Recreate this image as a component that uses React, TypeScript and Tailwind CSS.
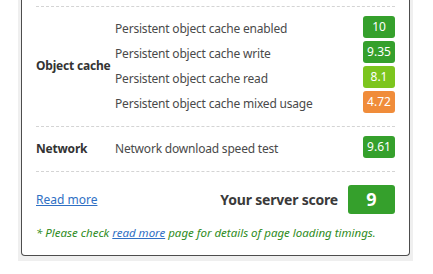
import React from "react";

type Test = { name: string; score: string; color: string };

const objectCache: Test[] = [
  { name: "Persistent object cache enabled", score: "10", color: "bg-[#35a02c]" },
  { name: "Persistent object cache write", score: "9.35", color: "bg-[#35a02c]" },
  { name: "Persistent object cache read", score: "8.1", color: "bg-[#7cc51e]" },
  { name: "Persistent object cache mixed usage", score: "4.72", color: "bg-[#f08c3a]" },
];

const network: Test[] = [
  { name: "Network download speed test", score: "9.61", color: "bg-[#35a02c]" },
];

function Group({ label, tests }: { label: string; tests: Test[] }) {
  return (
    <div className="flex items-center border-t border-dashed border-[#d4d4d4] pt-[9px] pb-[13px]">
      <div className="w-[79px] shrink-0 whitespace-nowrap pt-[3px] text-[12px] font-bold tracking-[-0.2px] text-[#333]">
        {label}
      </div>
      <div className="flex flex-1 flex-col gap-[3px]">
        {tests.map((t) => (
          <div key={t.name} className="flex h-[22px] items-center justify-between">
            <span className="pt-[3px] text-[12px] tracking-[-0.2px] text-[#4a4a4a]">{t.name}</span>
            <span
              className={`${t.color} flex h-[22px] w-[32px] items-center justify-center rounded-[3px] text-[12px] text-white`}
            >
              {t.score}
            </span>
          </div>
        ))}
      </div>
    </div>
  );
}

export default function App() {
  return (
    <div className="h-[274px] bg-white px-[18px] font-['Noto_Sans',sans-serif]">
      <div className="w-[395px] bg-[#efefef] px-[3px] pb-[5px]">
        <div className="rounded-b-[4px] border-x border-b border-[#4d4d4d] bg-white pl-[14px] pr-[14px] pt-[6px] pb-[14px]">
          <Group label="Object cache" tests={objectCache} />
          <Group label="Network" tests={network} />

          {/* footer */}
          <div className="border-t border-dashed border-[#d4d4d4] pt-[13px]">
            <div className="flex items-center justify-between">
              <a href="#" className="text-[12px] text-[#2f6fc4] underline">
                Read more
              </a>
              <div className="flex items-center gap-[10px]">
                <span className="text-[14px] font-bold tracking-[-0.2px] text-[#3a3a3a]">Your server score</span>
                <span className="flex h-[29px] w-[47px] items-center justify-center rounded-[3px] bg-[#35a02c] text-[18px] font-bold text-white">
                  9
                </span>
              </div>
            </div>
            <p className="mt-[10px] text-[11.5px] italic text-[#2e8b22]">
              * Please check{" "}
              <a href="#" className="text-[#2f6fc4] underline">
                read more
              </a>{" "}
              page for details of page loading timings.
            </p>
          </div>
        </div>
      </div>
    </div>
  );
}
